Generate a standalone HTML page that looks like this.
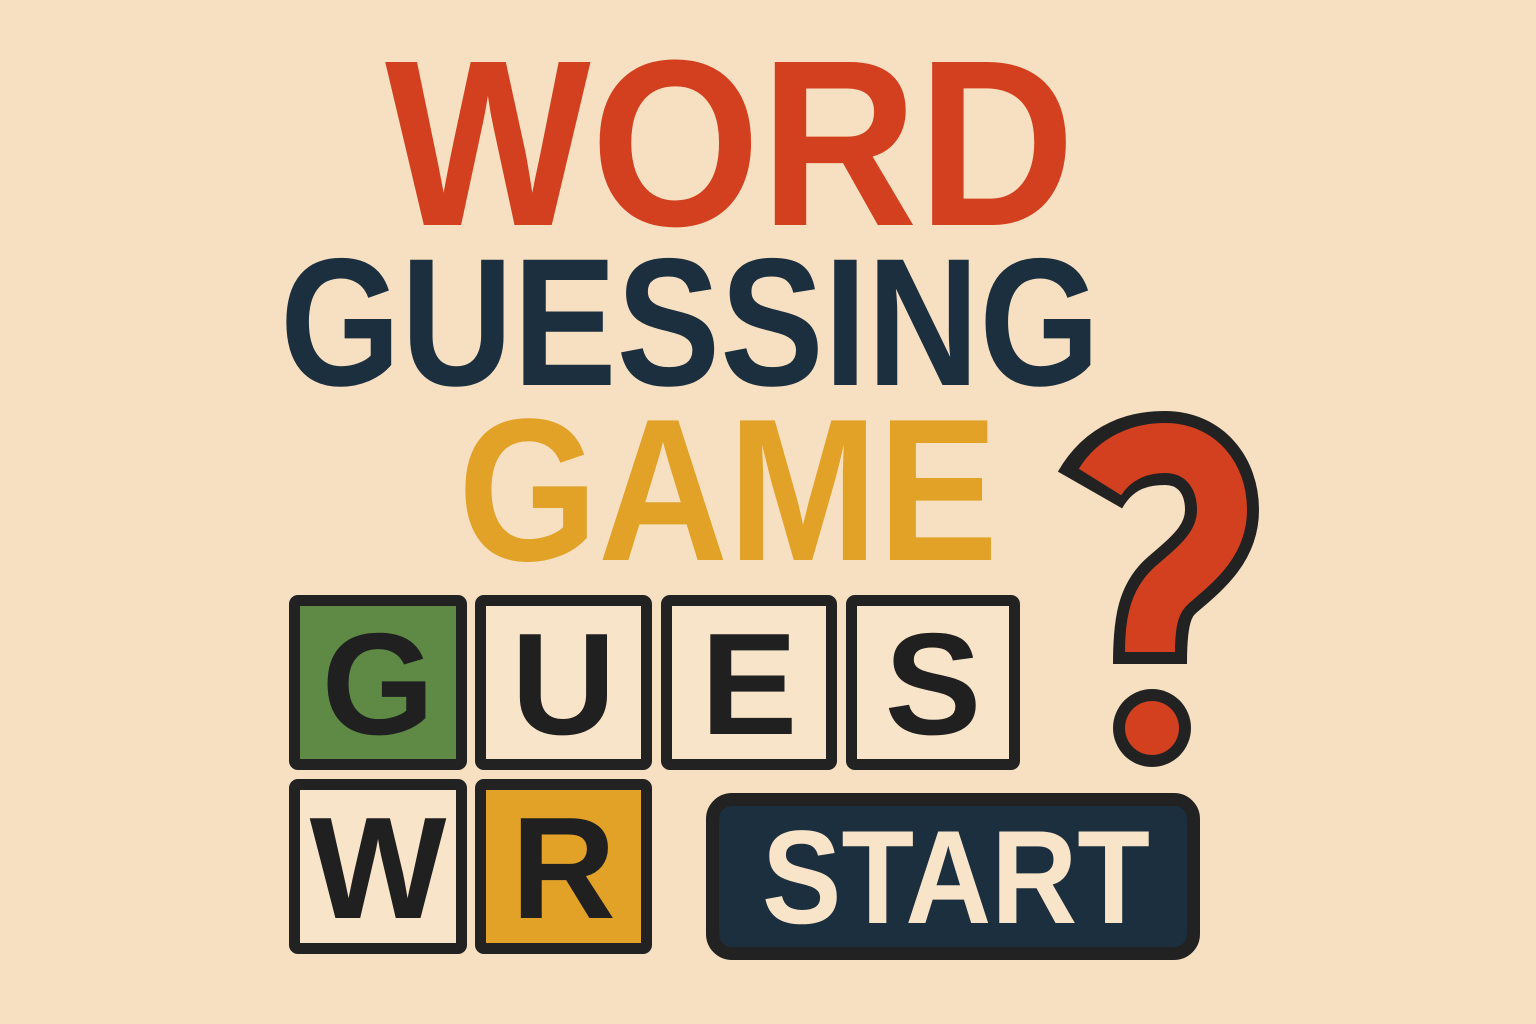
<!DOCTYPE html>
<html><head><meta charset="utf-8"><style>
html,body{margin:0;padding:0}
body{width:1536px;height:1024px;background:#f7e0c2;overflow:hidden;position:relative;font-family:"Liberation Sans",sans-serif}
.t{position:absolute;box-sizing:border-box;border:11px solid #222;border-radius:9px;display:flex;align-items:center;justify-content:center;font-weight:bold;font-size:145px;color:#202020;padding-top:4px}
</style></head><body>
<svg width="1536" height="1024" style="position:absolute;left:0;top:0">
<g font-family="Liberation Sans, sans-serif" font-weight="bold">
<text x="385" y="225" font-size="237" fill="#d2401f" textLength="690" lengthAdjust="spacingAndGlyphs">WORD</text>
<text x="280" y="385" font-size="182" fill="#1c2f3f" textLength="820" lengthAdjust="spacingAndGlyphs">GUESSING</text>
<text x="458" y="560" font-size="203" fill="#e2a228" textLength="540" lengthAdjust="spacingAndGlyphs">GAME</text>
</g>
<path d="M1090,490 C1110,455 1140,448 1165,448 C1200,448 1222,475 1222,510 C1222,545 1195,565 1172,585 C1155,600 1150,620 1150,664" fill="none" stroke="#222" stroke-width="74"/>
<path d="M1100,482 C1115,458 1140,448 1165,448 C1200,448 1222,475 1222,510 C1222,545 1195,565 1172,585 C1155,600 1150,620 1150,652" fill="none" stroke="#d2401f" stroke-width="50"/>
<circle cx="1152" cy="728" r="39" fill="#222"/>
<circle cx="1152" cy="728" r="27" fill="#d2401f"/>
</svg>
<div class="t" style="left:289px;top:595px;width:178px;height:175px;background:#5e8a45">G</div>
<div class="t" style="left:475px;top:595px;width:177px;height:175px;background:#f8e4c8">U</div>
<div class="t" style="left:661px;top:595px;width:176px;height:175px;background:#f8e4c8">E</div>
<div class="t" style="left:846px;top:595px;width:174px;height:175px;background:#f8e4c8">S</div>
<div class="t" style="left:289px;top:779px;width:178px;height:175px;background:#f8e4c8">W</div>
<div class="t" style="left:475px;top:779px;width:177px;height:175px;background:#e2a228">R</div>
<div class="t" style="left:706px;top:793px;width:494px;height:167px;background:#1c2f3f;border-radius:26px;border-width:13px;padding:0"></div>
<svg width="1536" height="1024" style="position:absolute;left:0;top:0">
<text x="762" y="923" font-family="Liberation Sans, sans-serif" font-weight="bold" font-size="133" fill="#f8e4c8" textLength="388" lengthAdjust="spacingAndGlyphs">START</text>
</svg>
</body></html>
